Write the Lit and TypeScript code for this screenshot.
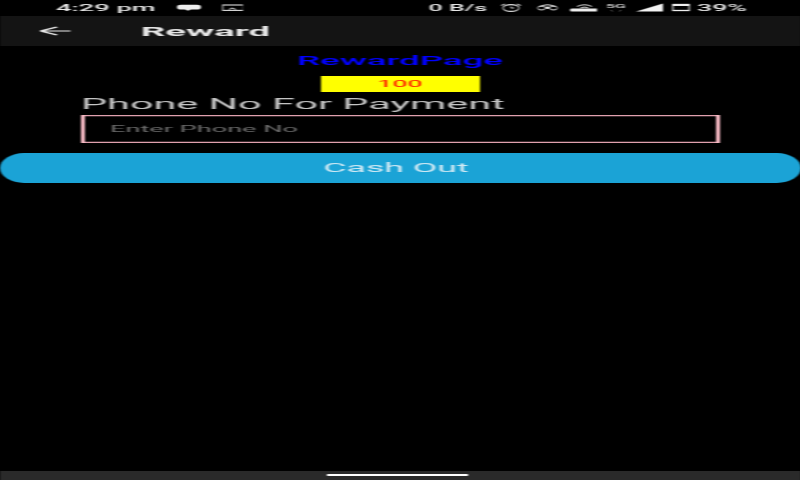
import { LitElement, html, css, svg } from "lit";
import { customElement } from "lit/decorators.js";

/* The reference is a phone screen squeezed into 800x480: everything is stretched
   3x horizontally, so the page is laid out in a 266.67px wide stage scaled by 3. */
const chat = svg`<path d="M4 4.800h16q4 0 4 2.400t-4 2.400h-6l-3 1.200-3-1.200H4q-4 0-4-2.400t4-2.400z" fill="#eee"/>`;
const image = svg`<rect x="0.700" y="5" width="20.600" height="5.400" stroke="#ddd" stroke-width="1.100"/><path d="M7 9.500l3-1.500 4 1.500" stroke="#ddd" stroke-width="1"/>`;
const alarm = svg`<ellipse cx="10" cy="8" rx="8" ry="3.400" stroke="#ddd" stroke-width="1.100"/><path d="M0 5.500l4-1.500M20 5.500l-4-1.500M10 6.500v1.500h3" stroke="#ddd" stroke-width="1"/>`;
const hotspot = svg`<path d="M3 6.500q7.500-3.500 15 0" stroke="#ddd" stroke-width="1.100"/><ellipse cx="4.500" cy="8" rx="3.800" ry="2" stroke="#ddd" stroke-width="1"/><ellipse cx="16.500" cy="8" rx="3.800" ry="2" stroke="#ddd" stroke-width="1"/><ellipse cx="10.500" cy="7.800" rx="2.200" ry="1.300" fill="#eee"/>`;
const wifi = svg`<path d="M7 6.500q7.500-3.500 15 0M10.500 8q4-2 8 0" stroke="#ddd" stroke-width="1"/><rect x="0" y="8.500" width="29" height="3" rx="1.500" fill="#eee"/>`;
const sig = svg`<text x="0" y="8.300" font-size="6" fill="#ddd" font-family="Roboto" font-weight="500" textLength="20" lengthAdjust="spacingAndGlyphs">5G</text><path d="M5 10l1.500 1.500M15 10l-1.500 1.500" stroke="#777"/>`;
const bars = svg`<path d="M0 11.500L27 3.500v8z" fill="#f2f2f2"/>`;
const battery = svg`<rect x="0.800" y="4.500" width="16.400" height="6" stroke="#eee" stroke-width="1.300"/><rect x="0.800" y="4" width="16.400" height="2" fill="#eee"/>`;

const rightIcons = [
  { w: 20, gap: 15, body: alarm },
  { w: 21, gap: 14, body: hotspot },
  { w: 29, gap: 12, body: wifi },
  { w: 20, gap: 9, body: sig },
  { w: 27, gap: 10, body: bars },
  { w: 18, gap: 9, body: battery },
];

@customElement("app-root")
export class AppRoot extends LitElement {
  static styles = css`
    :host { display: block; width: 800px; height: 480px; overflow: hidden; background: #000; }
    .stage {
      width: 266.667px; height: 480px; background: #000;
      display: flex; flex-direction: column;
      transform: scaleX(3); transform-origin: 0 0;
      font-family: Roboto, "Liberation Sans", sans-serif;
      filter: blur(0.3px);
    }
    .status {
      height: 16px; flex: none; display: flex; align-items: center;
      color: #e8e8e8; font-size: 9.1px; font-weight: 500;
      padding: 0 17.7px 0 18.667px;
    }
    .status svg { display: block; flex: none; height: 16px; }
    .time { width: 40.667px; }
    .gap1 { width: 6.667px; }
    .spacer { flex: 1; }
    .stats { font-size: 8.3px; }
    .batt { font-size: 8.9px; margin-left: 2px; }
    .header {
      height: 30px; flex: none; background: #141414; display: flex; align-items: center;
      color: #e6e6e6; font-size: 12.8px; font-weight: 700;
      padding-left: 12.9px; gap: 23px;
    }
    .header svg { width: 11px; height: 14px; display: block; }
    .content { display: flex; flex-direction: column; align-items: center; }
    .title { color: #0000ff; font-size: 12.2px; font-weight: 500; line-height: 31px; height: 30px; }
    .score {
      width: 53.333px; height: 16px; background: #ffff00; color: #ff0000;
      font-size: 8.9px; line-height: 17px; text-align: center;
    }
    .label {
      align-self: stretch; margin: 2px 0 0 27px; color: #c4c4c4;
      font-size: 13.8px; line-height: 20px; height: 18px;
    }
    .field {
      box-sizing: border-box; width: 213.333px; height: 28px; margin-top: 3px;
      box-shadow: inset 1.300px 0 #ffc0cb, inset -1.300px 0 #ffc0cb,
        inset 0 1.300px #e0a0ae, inset 0 -1.300px #e0a0ae;
      background: #000; display: flex; align-items: center; padding-left: 10px;
      color: #6e6e6e; font-size: 9.060px;
    }
    .cash {
      box-sizing: border-box; align-self: stretch; height: 30px; margin-top: 10px;
      border-radius: 8px / 15px; padding-right: 2.667px;
      background: #1ba3d6; color: #cfe9f4; font-size: 11.900px;
      display: flex; align-items: center; justify-content: center;
    }
    .spring { flex: 1; }
    .nav {
      height: 9px; flex: none; background: #2a2a2a; display: flex;
      align-items: center; justify-content: center;
    }
    .pill { width: 46.500px; height: 1.500px; background: #fff; margin: -1px 1.667px 0 0; }
  `;

  /* w and gap are in screen pixels; the stage stretches by 3. */
  private icon(w: number, body: unknown, gap = 0) {
    return html`<svg style="width:${w / 3}px;margin-left:${gap / 3}px" viewBox="0 0 ${w} 16" preserveAspectRatio="none" fill="none">${body}</svg>`;
  }

  render() {
    return html`
      <div class="stage">
        <div class="status">
          <span class="time">4:29 pm</span>
          ${this.icon(24, chat)}
          <span class="gap1"></span>
          ${this.icon(22, image)}
          <span class="spacer"></span>
          <span class="stats">0 B/s</span>
          ${rightIcons.map((i) => this.icon(i.w, i.body, i.gap))}
          <span class="batt">39%</span>
        </div>
        <div class="header">
          <svg viewBox="0 0 11 14" preserveAspectRatio="none" fill="none">
            <path d="M0.500 7H10.500M0.500 7L6 3M0.500 7L6 11" stroke="#e8e8e8" stroke-width="1"/>
          </svg>
          <span>Reward</span>
        </div>
        <div class="content">
          <div class="title">RewardPage</div>
          <div class="score">100</div>
          <div class="label">Phone No For Payment</div>
          <div class="field">Enter Phone No</div>
          <div class="cash">Cash Out</div>
        </div>
        <div class="spring"></div>
        <div class="nav"><div class="pill"></div></div>
      </div>
    `;
  }
}
